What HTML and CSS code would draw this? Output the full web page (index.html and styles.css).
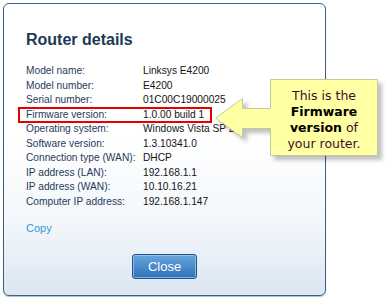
FILE: index.html
```html
<!DOCTYPE html>
<html>
<head>
<meta charset="utf-8">
<link rel="stylesheet" href="styles.css">
</head>
<body>
<div class="stage">
  <div class="dialog">
    <h1 class="title">Router details</h1>
    <div class="rows">
      <div class="row"><span class="label">Model name:</span><span class="value">Linksys E4200</span></div>
      <div class="row"><span class="label">Model number:</span><span class="value">E4200</span></div>
      <div class="row"><span class="label">Serial number:</span><span class="value">01C00C19000025</span></div>
      <div class="row highlight"><span class="label">Firmware version:</span><span class="value">1.0.00 build 1</span></div>
      <div class="row"><span class="label">Operating system:</span><span class="value">Windows Vista SP 2</span></div>
      <div class="row"><span class="label">Software version:</span><span class="value">1.3.10341.0</span></div>
      <div class="row"><span class="label">Connection type (WAN):</span><span class="value">DHCP</span></div>
      <div class="row"><span class="label">IP address (LAN):</span><span class="value">192.168.1.1</span></div>
      <div class="row"><span class="label">IP address (WAN):</span><span class="value">10.10.16.21</span></div>
      <div class="row"><span class="label">Computer IP address:</span><span class="value">192.168.1.147</span></div>
    </div>
    <a class="copy">Copy</a>
    <div class="actions"><button class="close">Close</button></div>
  </div>

  <div class="callout">
    <svg class="callout-shape" width="180" height="90" viewBox="210 72 180 90">
      <path d="M270.5 76.5 H377.5 V152.5 H270.5 V125.5 H242.5 V134.5 L215.5 115 L242.5 95.5 V105.5 H270.5 Z" fill="#ffffa3" stroke="#c9c79a" stroke-width="1"/>
    </svg>
    <div class="callout-text">This is the<br><b>Firmware</b><br><b>version</b> of<br>your router.</div>
  </div>
</div>
</body>
</html>
```
FILE: styles.css
```css
html, body {
  margin: 0;
  padding: 0;
  background: #ffffff;
}
.stage {
  position: relative;
  width: 388px;
  height: 302px;
}
.dialog {
  box-sizing: border-box;
  margin: 3px 0 0 3px;
  width: 323px;
  height: 293px;
  border: 1px solid #3b6283;
  border-radius: 6px;
  background: linear-gradient(to bottom, #ffffff 0%, #ffffff 45%, #f3f7fb 75%, #dbe6f2 100%);
  box-shadow: 0 1px 1px rgba(30, 60, 90, 0.35);
  padding: 26px 22px 0 22px;
  font-family: "Liberation Sans", Arial, sans-serif;
  display: flex;
  flex-direction: column;
}
.title {
  margin: 0;
  font-size: 16px;
  line-height: 20px;
  font-weight: bold;
  color: #1b3856;
}
.rows {
  margin-top: 14px;
  display: flex;
  flex-direction: column;
}
.row {
  position: relative;
  display: grid;
  grid-template-columns: 117px 1fr;
  font-size: 10.2px;
  line-height: 14.5px;
  height: 14.5px;
}
.label {
  color: #1f3b5a;
}
.value {
  color: #141414;
}
.highlight::after {
  content: "";
  position: absolute;
  left: -8px;
  top: -1px;
  width: 190px;
  height: 12px;
  border: 2px solid #e60000;
}
.copy {
  margin-top: 12px;
  font-size: 11px;
  line-height: 14px;
  color: #2d9ad8;
  align-self: flex-start;
}
.actions {
  margin-top: 19px;
  display: flex;
  justify-content: center;
}
.close {
  width: 65px;
  height: 25px;
  border: 1px solid #1d5591;
  border-radius: 3px;
  background: linear-gradient(to bottom, #6aa6dc 0%, #4a8bcc 50%, #2f6fb5 100%);
  box-shadow: inset 0 0 0 1px rgba(170, 205, 240, 0.7);
  color: #ffffff;
  font-family: "Liberation Sans", Arial, sans-serif;
  font-size: 13px;
  padding: 0;
}
.callout {
  position: absolute;
  left: 210px;
  top: 72px;
  width: 180px;
  height: 90px;
}
.callout-shape {
  display: block;
  filter: drop-shadow(4px 4px 2px rgba(0, 0, 0, 0.25));
}
.callout-text {
  position: absolute;
  left: 59px;
  top: 13px;
  width: 110px;
  text-align: center;
  font-family: "DejaVu Sans", Verdana, sans-serif;
  font-size: 12.5px;
  line-height: 16px;
  color: #3a0f2c;
}
.callout-text b {
  color: #000000;
}
```
